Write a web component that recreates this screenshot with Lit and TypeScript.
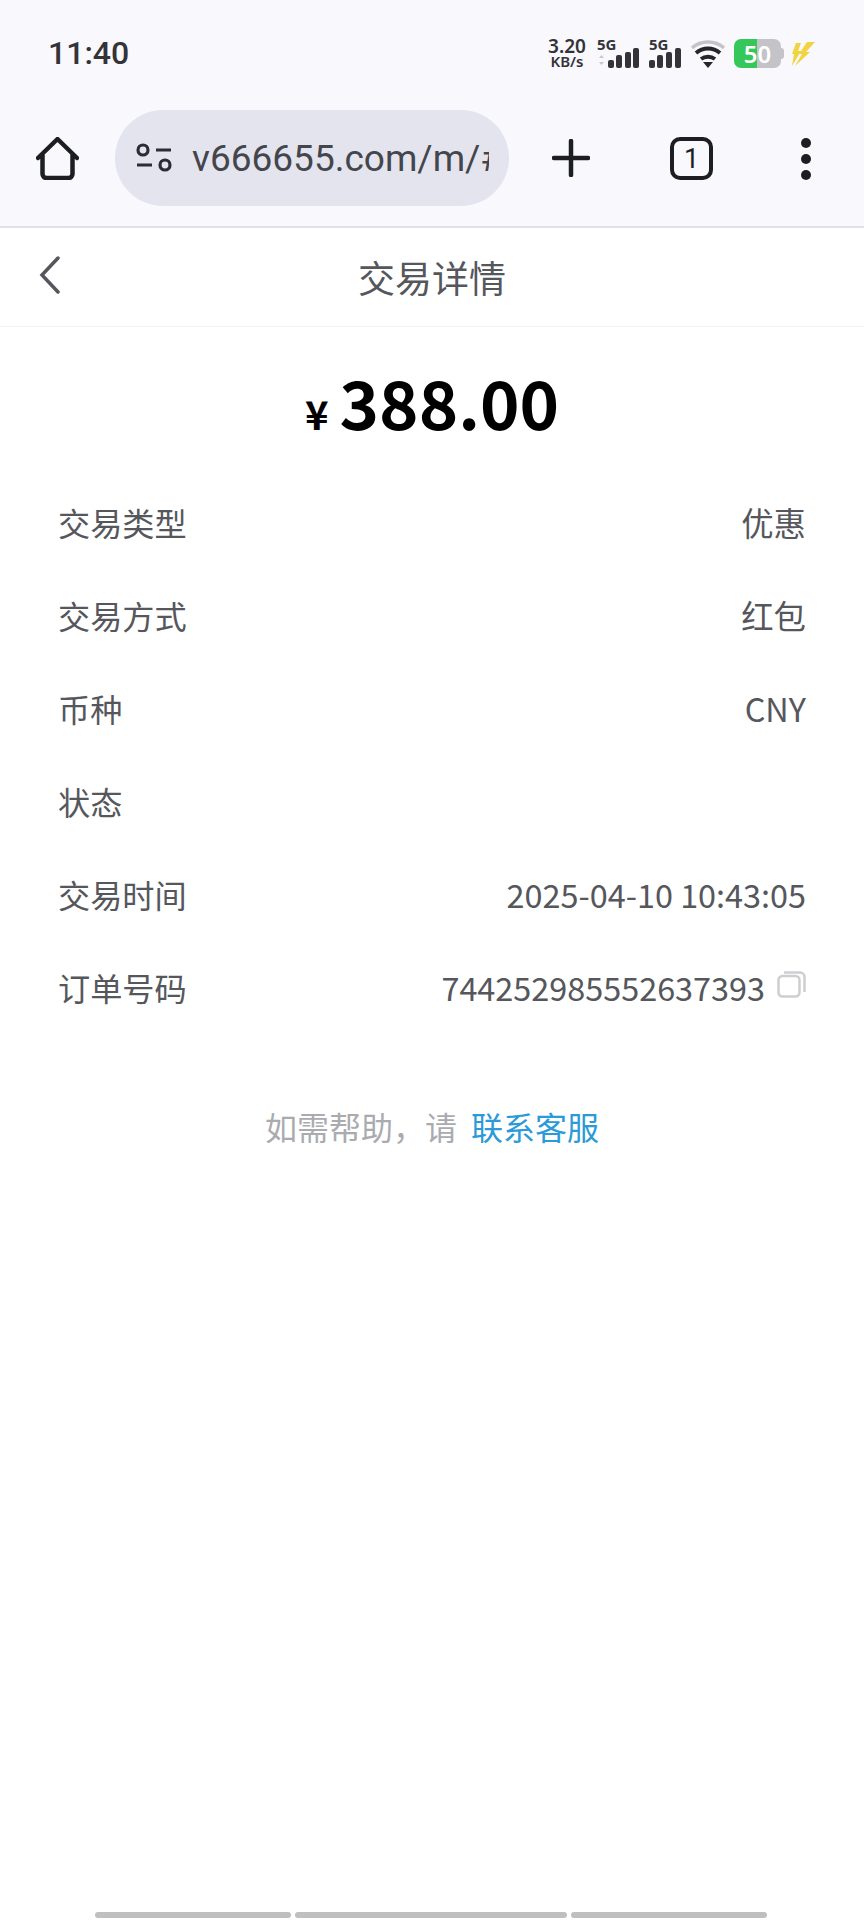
import { LitElement, html, svg, css } from "lit";
import { customElement } from "lit/decorators.js";

const rows: [string, string][] = [
  ["交易类型", "优惠"],
  ["交易方式", "红包"],
  ["币种", "CNY"],
  ["状态", ""],
  ["交易时间", "2025-04-10 10:43:05"],
];

// bars are drawn in the lower part, the 5G label sits above the short ones
const signal = (dim: boolean) => {
  const x = dim ? [11, 19, 28, 36] : [0, 8, 17, 26];
  const h = [8, 13, 16, 20];
  return html`<svg width="${dim ? 42 : 32}" height="20" viewBox="0 0 ${dim ? 42 : 32} 20">
    ${dim ? svg`<path d="M4.500 7l2.500 3h-5zM4.500 17l2.500-3h-5z" fill="#c8c8cc"></path>` : ""}
    ${x.map(
      (v, i) => svg`<rect x="${v}" y="${20 - h[i]}" width="6" height="${h[i]}" rx="2" fill="#333338"></rect>`
    )}
  </svg>`;
};

@customElement("app-root")
class AppRoot extends LitElement {
  static override styles = css`
    :host {
      display: flex;
      flex-direction: column;
      width: 864px;
      height: 1920px;
      background: #fff;
      overflow: hidden;
      font-family: "Noto Sans CJK SC", "Noto Sans", sans-serif;
      color: #55575c;
    }
    .top {
      height: 226px;
      flex: none;
      background: #f8f8fd;
      border-bottom: 2px solid #e2e2e6;
      display: flex;
      flex-direction: column;
    }
    .status {
      height: 110px;
      flex: none;
      padding: 0 49px 3px 48px;
      display: flex;
      align-items: center;
      justify-content: space-between;
      box-sizing: border-box;
    }
    .time {
      font-family: Roboto, sans-serif;
      font-weight: 500;
      font-size: 32px;
      color: #333338;
      margin-top: -1px;
    }
    .indicators {
      display: flex;
      align-items: center;
    }
    .speed {
      font-family: "Noto Sans", sans-serif;
      font-weight: 600;
      color: #333338;
      display: flex;
      flex-direction: column;
      align-items: center;
      line-height: 15px;
      margin-right: 12px;
      font-size: 19px;
      width: 36px;
    }
    .speed small {
      font-size: 15px;
    }
    .net {
      display: flex;
      flex-direction: column;
      height: 29px;
      margin-right: 10px;
      font-family: "Noto Sans", sans-serif;
      font-weight: 700;
      font-size: 15px;
      color: #333338;
    }
    .net span {
      height: 9px;
      line-height: 11px;
    }
    .net svg {
      display: block;
    }
    .wifi {
      margin-right: 8px;
      margin-left: -1px;
    }
    .battery-wrap {
      display: flex;
      align-items: center;
      margin-right: 7px;
    }
    .battery {
      width: 47px;
      height: 29px;
      border-radius: 7px;
      background: linear-gradient(90deg, #35c759 0 23px, #c3c3c8 23px);
      color: #fff;
      font-family: "Noto Sans", sans-serif;
      font-weight: 600;
      font-size: 24px;
      line-height: 29px;
      text-align: center;
    }
    .nub {
      width: 3px;
      height: 11px;
      border-radius: 0 3px 3px 0;
      background: #c3c3c8;
    }
    .bar {
      flex: 1;
      display: flex;
      align-items: flex-start;
      padding-left: 36px;
    }
    .home {
      width: 43px;
      height: 43px;
      margin-top: 27px;
      margin-right: 36px;
    }
    .pill {
      width: 394px;
      height: 96px;
      border-radius: 48px;
      background: #e3e4ee;
      display: flex;
      align-items: center;
      box-sizing: border-box;
      padding-left: 20px;
      overflow: hidden;
    }
    .url {
      font-family: Roboto, sans-serif;
      font-size: 37px;
      color: #44464c;
      margin-left: 19px;
      width: 297px;
      white-space: nowrap;
      overflow: hidden;
    }
    .plus {
      margin: 29px 0 0 43px;
    }
    .tabs {
      margin: 27px 0 0 80px;
      width: 43px;
      height: 43px;
      box-sizing: border-box;
      border: 4px solid #1d1e24;
      border-radius: 10px;
      display: flex;
      align-items: center;
      justify-content: center;
      font-family: Roboto, sans-serif;
      font-size: 27px;
      color: #1d1e24;
    }
    .dots {
      margin: 28px 0 0 88px;
      display: flex;
      flex-direction: column;
      gap: 6px;
    }
    .dots i {
      display: block;
      width: 10px;
      height: 10px;
      border-radius: 50%;
      background: #1d1e24;
    }
    .head {
      height: 98px;
      flex: none;
      border-bottom: 1px solid #f2f2f2;
      display: grid;
      grid-template-columns: 1fr auto 1fr;
      align-items: center;
      font-size: 37px;
      line-height: 94px;
    }
    .back {
      margin: -4px 0 0 38px;
      display: block;
    }
    .amount {
      flex: none;
      display: flex;
      justify-content: center;
      align-items: baseline;
      color: #000;
      font-family: "Noto Sans CJK SC", sans-serif;
      font-weight: 700;
      height: 148px;
      line-height: 148px;
      font-size: 67px;
    }
    .amount small {
      font-size: 40px;
      margin-right: 11px;
    }
    .rows {
      padding: 0 58px;
    }
    .row {
      height: 93px;
      display: flex;
      align-items: center;
      justify-content: space-between;
      font-size: 32.2px;
    }
    .val {
      font-size: 32.4px;
    }
    .order {
      display: flex;
      align-items: center;
      gap: 12px;
    }
    .order svg {
      margin-top: -4px;
    }
    .help {
      margin-top: 70px;
      text-align: center;
      font-size: 32px;
      color: #a9abaf;
    }
    .help span {
      color: #2a9ad8;
      margin-left: 7px;
    }
    .gestures {
      margin-top: auto;
      padding: 0 0 2px 95px;
      display: flex;
      gap: 4px;
    }
    .gestures i {
      display: block;
      height: 6px;
      background: #bfbfbf;
      border-radius: 3px;
    }
  `;

  override render() {
    return html`
      <div class="top">
        <div class="status">
          <span class="time">11:40</span>
          <div class="indicators">
            <div class="speed">3.20<small>KB/s</small></div>
            <div class="net"><span>5G</span>${signal(true)}</div>
            <div class="net"><span>5G</span>${signal(false)}</div>
            <svg class="wifi" width="36" height="30" viewBox="0 0 36 30">
              <path d="M2 9c9-8 23-8 32 0" fill="none" stroke="#c3c3c8" stroke-width="3.500"></path>
              <path d="M6 14c7-6 17-6 24 0" fill="none" stroke="#26262b" stroke-width="3.800"></path>
              <path d="M11 20c4-3 10-3 14 0" fill="none" stroke="#26262b" stroke-width="3.800"></path>
              <path d="M13 23h10l-5 6z" fill="#26262b"></path>
            </svg>
            <div class="battery-wrap"><div class="battery">50</div><div class="nub"></div></div>
            <svg width="24" height="26" viewBox="0 0 24 26">
              <path d="M5 2h5L7 10h3L1 25l2-12H1zM16 1h8L15 11h4L4 25l7-12H8z" fill="#f1d43f"></path>
            </svg>
          </div>
        </div>
        <div class="bar">
          <svg class="home" viewBox="0 0 43 43" fill="none" stroke="#1d1e24" stroke-width="4.500" stroke-linejoin="round" stroke-linecap="round">
            <path d="M2 21L21.500 2 41 21M6.500 18v19a4 4 0 0 0 4 4h22a4 4 0 0 0 4-4V18"></path>
          </svg>
          <div class="pill">
            <svg width="38" height="30" viewBox="0 0 38 30" fill="none" stroke="#2c2d33" stroke-width="3.200">
              <circle cx="8" cy="7" r="5"></circle>
              <path d="M21 7h15M2 22h15"></path>
              <circle cx="30" cy="22" r="5"></circle>
            </svg>
            <div class="url">v666655.com/m/#/wallet</div>
          </div>
          <svg class="plus" width="38" height="38" viewBox="0 0 38 38" stroke="#1d1e24" stroke-width="4.500" stroke-linecap="round">
            <path d="M19 2v34M2 19h34"></path>
          </svg>
          <div class="tabs">1</div>
          <div class="dots"><i></i><i></i><i></i></div>
        </div>
      </div>
      <div class="head">
        <svg class="back" width="24" height="38" viewBox="0 0 24 38" fill="none" stroke="#55575c" stroke-width="3.500" stroke-linecap="round">
          <path d="M20 2L4 19l16 17"></path>
        </svg>
        <span>交易详情</span>
        <span></span>
      </div>
      <div class="amount"><small>¥</small>388.00</div>
      <div class="rows">
        ${rows.map(([k, v]) => html`<div class="row"><span>${k}</span><span class="val">${v}</span></div>`)}
        <div class="row">
          <span>订单号码</span>
          <span class="order val">
            744252985552637393
            <svg width="29" height="27" viewBox="0 0 29 27" fill="none" stroke="#cdced1" stroke-width="2.500">
              <rect x="1.500" y="5" width="21" height="20.500" rx="4"></rect>
              <path d="M7 1.500h16a4.500 4.500 0 0 1 4.500 4.500v15"></path>
            </svg>
          </span>
        </div>
      </div>
      <div class="help">如需帮助，请 <span>联系客服</span></div>
      <div class="gestures">
        <i style="width:196px"></i><i style="width:272px"></i><i style="width:196px"></i>
      </div>
    `;
  }
}
